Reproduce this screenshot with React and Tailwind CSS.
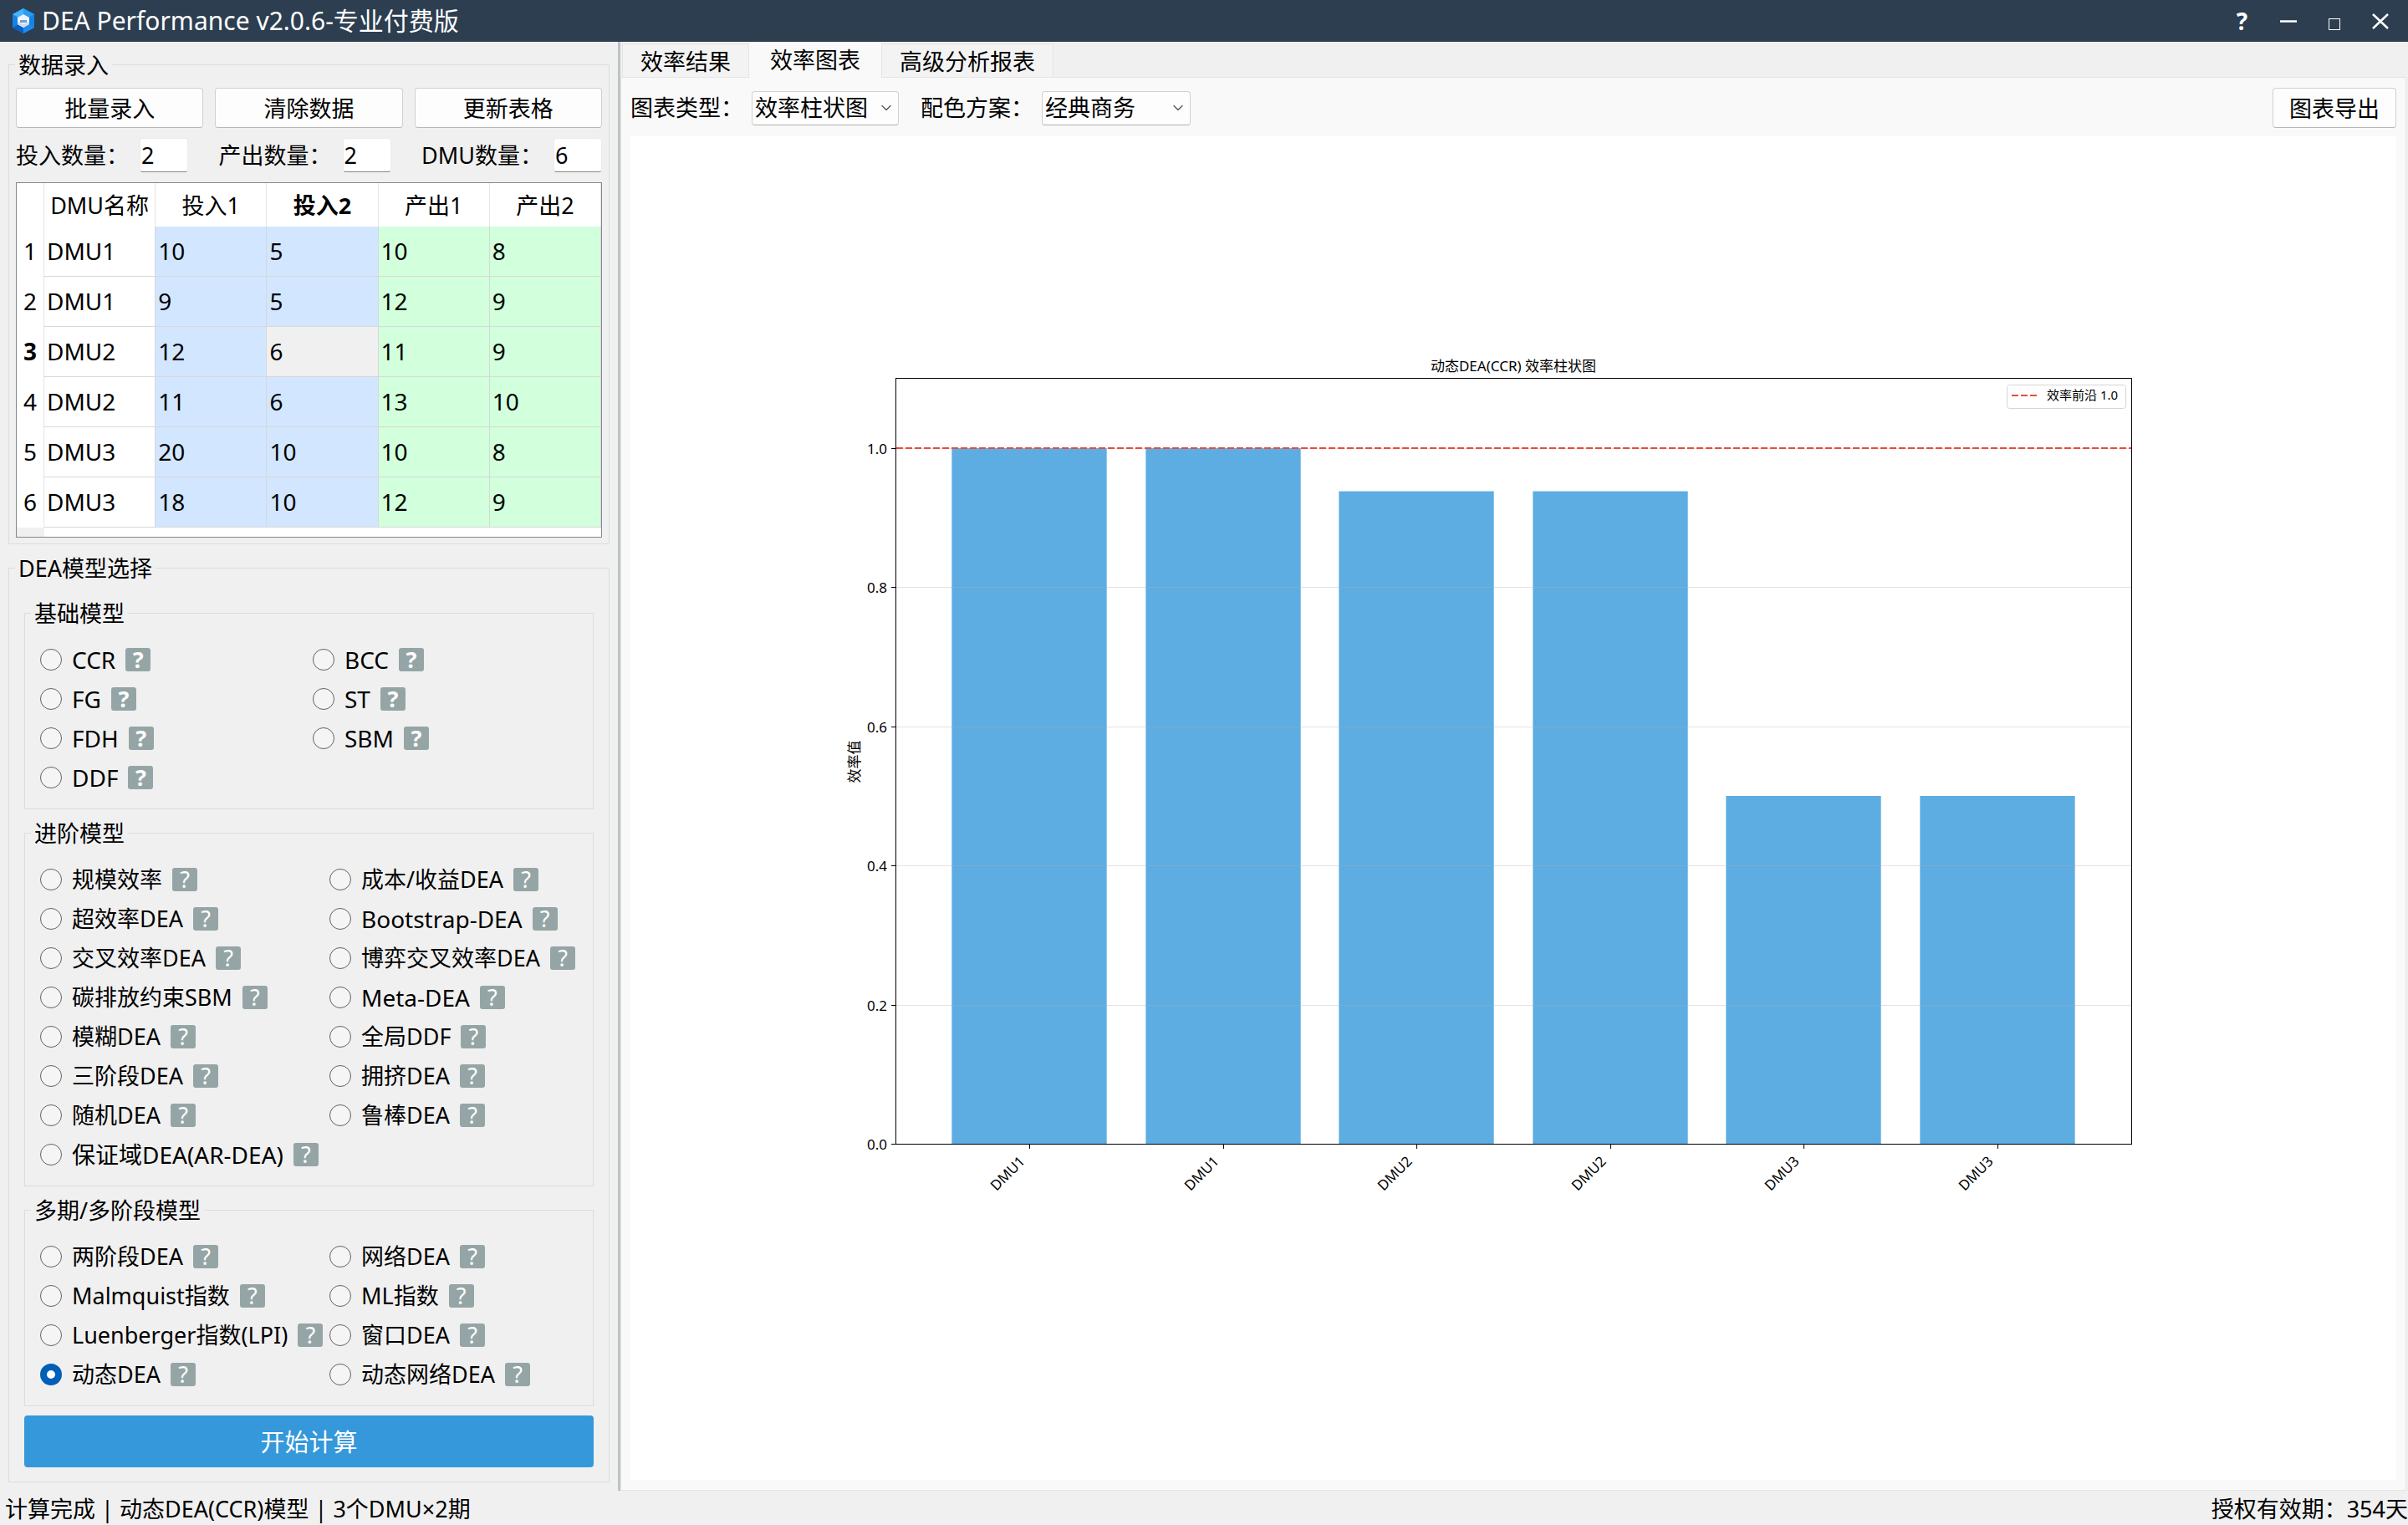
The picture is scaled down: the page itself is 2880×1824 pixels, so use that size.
import { useState } from 'react'
import { ChevronDown } from 'lucide-react'

const columns = ['DMU名称', '投入1', '投入2', '产出1', '产出2']

const rows = [
  ['DMU1', 10, 5, 10, 8],
  ['DMU1', 9, 5, 12, 9],
  ['DMU2', 12, 6, 11, 9],
  ['DMU2', 11, 6, 13, 10],
  ['DMU3', 20, 10, 10, 8],
  ['DMU3', 18, 10, 12, 9],
]

const columnColors = ['bg-white', 'bg-[#d2e6ff]', 'bg-[#d2e6ff]', 'bg-[#d2ffdc]', 'bg-[#d2ffdc]']

const basicModels = ['CCR', 'BCC', 'FG', 'ST', 'FDH', 'SBM', 'DDF']

const advancedModels = [
  '规模效率', '成本/收益DEA',
  '超效率DEA', 'Bootstrap-DEA',
  '交叉效率DEA', '博弈交叉效率DEA',
  '碳排放约束SBM', 'Meta-DEA',
  '模糊DEA', '全局DDF',
  '三阶段DEA', '拥挤DEA',
  '随机DEA', '鲁棒DEA',
  '保证域DEA(AR-DEA)',
]

const periodModels = [
  '两阶段DEA', '网络DEA',
  'Malmquist指数', 'ML指数',
  'Luenberger指数(LPI)', '窗口DEA',
  '动态DEA', '动态网络DEA',
]

const scores = [
  { name: 'DMU1', value: 1 },
  { name: 'DMU1', value: 1 },
  { name: 'DMU2', value: 0.938 },
  { name: 'DMU2', value: 0.938 },
  { name: 'DMU3', value: 0.5 },
  { name: 'DMU3', value: 0.5 },
]

function Logo() {
  return (
    <svg viewBox="0 0 26 32" className="w-[26px] h-8" aria-hidden="true">
      <path d="M13 1 L26 8 V24 L13 31 L0 24 V8 Z" fill="#1583e6" />
      <path d="M13 1 L0 8 L7 12 L13 8 Z" fill="#45b4fb" />
      <path d="M13 1 L26 8 L19 12 L13 8 Z" fill="#2a9cf4" />
      <path d="M0 24 L7 20 L13 24 V31 Z" fill="#0b5fc4" />
      <path d="M26 24 L19 20 L13 24 V31 Z" fill="#1d8cf0" />
      <path d="M13 8 L20 12 V20 L13 24 L6 20 V12 Z" fill="#eef4fb" />
      <path d="M13 24 L6 20 V17 L13 20 L20 17 V20 Z" fill="#cfdcec" />
      <path d="M9 16.5 H17" stroke="#6f9fdc" strokeWidth="3" />
    </svg>
  )
}

function TitleBar() {
  const btn = 'flex items-center justify-center w-[55px] h-full text-white'
  return (
    <header className="flex items-center h-[50px] pl-[15px] pr-[6px] bg-[#2c3e50] text-white">
      <Logo />
      <h1 className="ml-[9px] text-[30px] leading-[50px]">DEA Performance v2.0.6-专业付费版</h1>
      <div className="flex h-full ml-auto">
        <button className={`${btn} text-[28px] font-bold`} title="帮助">?</button>
        <button className={btn} title="最小化">
          <svg viewBox="0 0 20 20" className="w-5 h-5"><path d="M0 10.5 H20" stroke="currentColor" strokeWidth="2.5" /></svg>
        </button>
        <button className={btn} title="最大化">
          <svg viewBox="0 0 24 24" className="w-6 h-6"><rect x="5.5" y="9.5" width="13" height="13" fill="none" stroke="currentColor" /></svg>
        </button>
        <button className={btn} title="关闭">
          <svg viewBox="0 0 20 20" className="w-5 h-5"><path d="M1 2 L19 19 M19 2 L1 19" stroke="currentColor" strokeWidth="2.5" /></svg>
        </button>
      </div>
    </header>
  )
}

function Group({ title, className, children }) {
  return (
    <fieldset className="min-w-0 border border-[#dcdcdc]">
      <legend className="ml-[7px] px-1 pt-[2px] leading-9">{title}</legend>
      <div className={className}>{children}</div>
    </fieldset>
  )
}

function PushButton({ className = '', children }) {
  return (
    <button className={`h-12 pt-px rounded border border-[#d0d0d0] border-b-[#b8b8b8] bg-[#fdfdfd] ${className}`}>
      {children}
    </button>
  )
}

function CountField({ label, value }) {
  return (
    <label className="flex items-center gap-[13px]">
      {label}
      <input
        type="text"
        defaultValue={value}
        className="w-[58px] h-[41px] pl-px rounded-sm border border-[#ebebeb] border-b-[#868686] bg-white outline-none"
      />
    </label>
  )
}

function DataTable() {
  return (
    <div className="border border-[#828790] bg-white">
      <table className="w-full table-fixed border-separate border-spacing-0 text-[28px]">
        <thead>
          <tr className="h-[52px] text-[27px]">
            <th className="w-[33px] border-r border-[#e5e5e5]" />
            {columns.map((c, i) => (
              <th key={c} className={`pt-[2px] border-r border-[#e5e5e5] whitespace-nowrap ${i === 2 ? 'font-bold' : 'font-normal'}`}>{c}</th>
            ))}
          </tr>
        </thead>
        <tbody>
          {rows.map((row, r) => (
            <tr key={r} className="h-[60px]">
              <th className={`pb-[2px] border-r border-[#e5e5e5] ${r === 2 ? 'font-bold' : 'font-normal'}`}>{r + 1}</th>
              {row.map((cell, c) => (
                <td
                  key={c}
                  className={`pl-[3px] pb-[2px] border-r border-b border-[#d8d8d8] ${r === 2 && c === 2 ? 'bg-[#f0f0f0]' : columnColors[c]}`}
                >
                  {cell}
                </td>
              ))}
            </tr>
          ))}
        </tbody>
      </table>
      <div className="w-[33px] h-[11px] bg-[#f0f0f0]" />
    </div>
  )
}

function ModelOption({ name, bold, selected, onSelect }) {
  // 英文缩写和带连字符的名称字号略大
  const size = /^\w+$|-/.test(name) ? 'text-[28px]' : ''
  return (
    <div className="flex items-center gap-3 h-[47px] whitespace-nowrap">
      <label className={`flex items-center gap-3 ${size}`}>
        <input
          type="radio"
          name="model"
          checked={selected}
          onChange={() => onSelect(name)}
          className="appearance-none shrink-0 w-[26px] h-[26px] rounded-full border border-[#626262] bg-[#f5f5f5] checked:border-8 checked:border-[#005fb8] checked:bg-white"
        />
        <span className="pt-px">{name}</span>
      </label>
      <button className={`shrink-0 w-[30px] h-7 rounded-[3px] bg-[#95a5a6] text-white leading-7 ${bold ? 'font-bold' : ''}`} title={`${name} 说明`}>
        ?
      </button>
    </div>
  )
}

function Sidebar() {
  const [model, setModel] = useState('动态DEA')
  const options = (list, bold) =>
    list.map((name) => (
      <ModelOption key={name} name={name} bold={bold} selected={model === name} onSelect={setModel} />
    ))

  return (
    <aside className="flex flex-col gap-[9px] shrink-0 w-[742px] px-[10px] pt-2 pb-[10px] border-r-3 border-[#bdc3c7]">
      <Group title="数据录入" className="flex flex-col gap-3 px-2 pt-[9px] pb-[7px]">
        <div className="grid grid-cols-3 gap-[14px]">
          <PushButton>批量录入</PushButton>
          <PushButton>清除数据</PushButton>
          <PushButton>更新表格</PushButton>
        </div>
        <div className="flex justify-between">
          <CountField label="投入数量：" value="2" />
          <CountField label="产出数量：" value="2" />
          <CountField label="DMU数量：" value="6" />
        </div>
        <DataTable />
      </Group>

      <Group title="DEA模型选择" className="flex flex-col gap-[9px] px-[18px] pt-4 pb-[17px]">
        <Group title="基础模型" className="grid grid-cols-[326px_1fr] px-[18px] pt-[13px] pb-[14px]">
          {options(basicModels, true)}
        </Group>
        <Group title="进阶模型" className="grid grid-cols-[346px_1fr] px-[18px] pt-[13px] pb-[14px]">
          {options(advancedModels)}
        </Group>
        <Group title="多期/多阶段模型" className="grid grid-cols-[346px_1fr] px-[18px] pt-[13px] pb-[14px]">
          {options(periodModels)}
        </Group>
        <button className="h-[62px] mt-[2px] pt-[2px] rounded bg-[#3498db] text-white text-[29px]">开始计算</button>
      </Group>
    </aside>
  )
}

function Dropdown({ label, items, className }) {
  return (
    <label className="flex items-center gap-[10px]">
      {label}
      <span className="relative flex">
        <select className={`appearance-none h-[41px] pl-[3px] rounded-sm border border-[#d0d0d0] border-b-[#b0b0b0] bg-[#fdfdfd] outline-none ${className}`}>
          {items.map((item) => <option key={item}>{item}</option>)}
        </select>
        <ChevronDown className="absolute right-[5px] top-[10px] w-5 h-5 text-[#555] pointer-events-none" strokeWidth={1.5} />
      </span>
    </label>
  )
}

// plot area inside the 2112x1607 figure
const plot = { left: 318, right: 1796, top: 290, bottom: 1205 }
const unit = 832
const step = (plot.right - plot.left) / 6.38
const barWidth = step * 0.8
const yOf = (v) => plot.bottom - v * unit
const xOf = (i) => Math.round(plot.left + (i + 0.69) * step) - 1

function BarChart() {
  const ticks = [0, 0.2, 0.4, 0.6, 0.8, 1]
  return (
    <svg viewBox="0 0 2112 1607" className="w-full h-full text-[17px]" role="img" aria-label="动态DEA(CCR) 效率柱状图">
      <text x="1056" y="281" textAnchor="middle">动态DEA(CCR) 效率柱状图</text>
      {scores.map((s, i) => (
        <rect key={i} x={xOf(i) - barWidth / 2} y={yOf(s.value)} width={barWidth} height={s.value * unit} fill="#5dade2" />
      ))}
      {ticks.map((t) => (
        <g key={t}>
          <path d={`M${plot.left} ${Math.round(yOf(t)) + 0.5} H${plot.right}`} stroke="#b0b0b0" strokeOpacity="0.35" />
          <path d={`M${plot.left - 6} ${Math.round(yOf(t)) + 0.5} h6`} stroke="#000" />
          <text x="307" y={Math.round(yOf(t)) + 7} textAnchor="end">{t.toFixed(1)}</text>
        </g>
      ))}
      {scores.map((s, i) => (
        <g key={i}>
          <path d={`M${xOf(i) + 0.5} ${plot.bottom} v6`} stroke="#000" />
          <text transform={`translate(${xOf(i) - 4} 1227) rotate(-45)`} textAnchor="end">{s.name}</text>
        </g>
      ))}
      <path d={`M${plot.left} ${yOf(1)} H${plot.right}`} stroke="#e74c3c" strokeWidth="2" strokeDasharray="8 3" />
      <rect x={plot.left - 0.5} y={plot.top - 0.5} width={plot.right - plot.left} height={plot.bottom - plot.top + 1} fill="none" stroke="#000" />
      <text transform="translate(274 748) rotate(-90)" textAnchor="middle">效率值</text>
      <rect x="1646.5" y="297.5" width="142" height="28" rx="3" fill="#fff" stroke="#d5d5d5" />
      <path d="M1652 310 h31" stroke="#e74c3c" strokeWidth="2" strokeDasharray="8 3" />
      <text x="1694" y="315" className="text-[15px]">效率前沿 1.0</text>
    </svg>
  )
}

function ChartPane() {
  const tab = 'h-10 pt-[2px] border border-b-0 border-[#e5e5e5] bg-[#f3f3f3] px-[21px]'
  return (
    <main className="flex flex-col flex-1 min-w-0 pr-[2px]">
      <nav className="flex items-end h-[42px] pl-[2px]" role="tablist">
        <button role="tab" className={tab}>效率结果</button>
        <button role="tab" aria-selected="true" className="relative h-[42px] -mb-px px-[25px] bg-[#f9f9f9]">效率图表</button>
        <button role="tab" className={tab}>高级分析报表</button>
      </nav>
      <section className="flex flex-col flex-1 gap-[10px] px-[11px] py-3 border border-[#e5e5e5] bg-[#f9f9f9]">
        <div className="flex items-center gap-[26px]">
          <Dropdown label="图表类型：" items={['效率柱状图']} className="w-[176px]" />
          <Dropdown label="配色方案：" items={['经典商务']} className="w-[178px]" />
          <PushButton className="w-[148px] ml-auto">图表导出</PushButton>
        </div>
        <div className="flex-1 bg-white">
          <BarChart />
        </div>
      </section>
    </main>
  )
}

export default function App() {
  return (
    <div className="flex flex-col min-h-screen bg-[#f0f0f0] text-black text-[27px] leading-9 font-['Noto_Sans','Noto_Sans_CJK_SC',sans-serif]">
      <TitleBar />
      <div className="flex flex-1">
        <Sidebar />
        <ChartPane />
      </div>
      <footer className="flex items-center justify-between h-[41px] pl-[6px] pt-[2px]">
        <span>计算完成 | 动态DEA(CCR)模型 | 3个DMU×2期</span>
        <span>授权有效期：354天</span>
      </footer>
    </div>
  )
}
